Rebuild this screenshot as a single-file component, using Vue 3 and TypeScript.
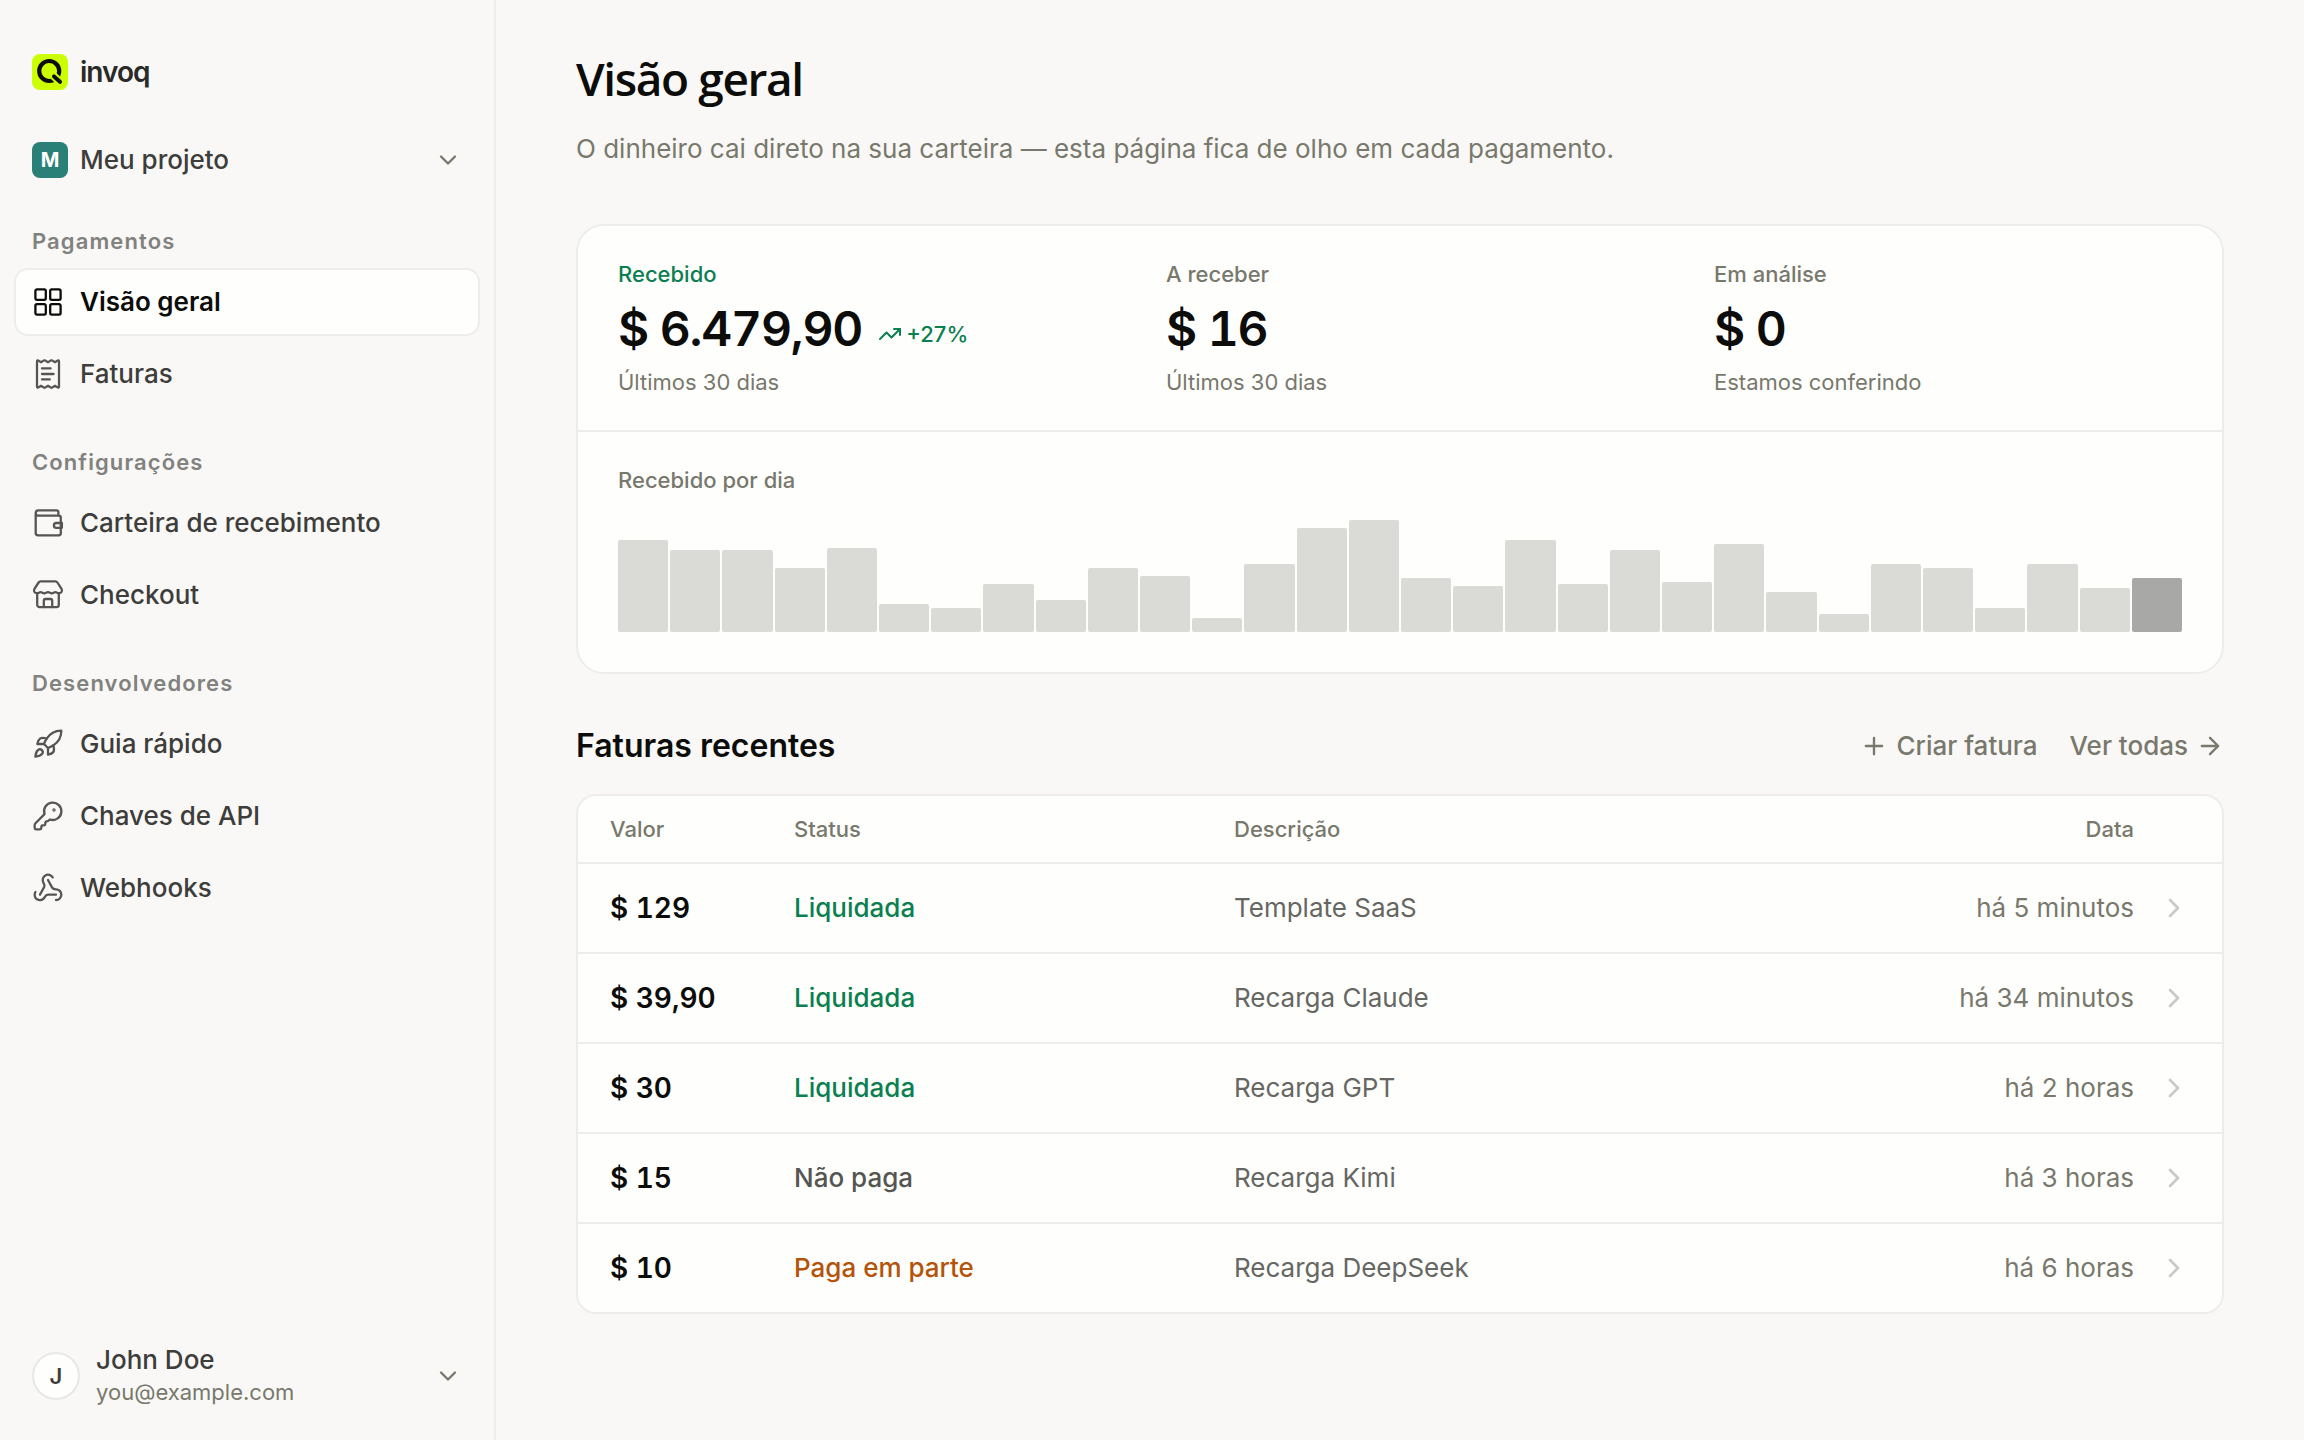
<script setup lang="ts">
interface Shape {
  d: string
  dot?: boolean
}
interface NavItem {
  label: string
  box: number
  shapes: Shape[]
  active?: boolean
}
interface NavGroup {
  title: string
  items: NavItem[]
}
interface Invoice {
  amount: string
  status: string
  tone: 'paid' | 'unpaid' | 'partial'
  description: string
  date: string
}

const groups: NavGroup[] = [
  {
    title: 'Pagamentos',
    items: [
      {
        label: 'Visão geral',
        box: 32,
        active: true,
        shapes: [
          { d: 'M5 3.4h7.2a1.6 1.6 0 0 1 1.6 1.6v7.2a1.6 1.6 0 0 1-1.6 1.6H5a1.6 1.6 0 0 1-1.6-1.6V5A1.6 1.6 0 0 1 5 3.4z' },
          { d: 'M19.8 3.4H27A1.6 1.6 0 0 1 28.6 5v7.2a1.6 1.6 0 0 1-1.6 1.6h-7.2a1.6 1.6 0 0 1-1.6-1.6V5a1.6 1.6 0 0 1 1.6-1.6z' },
          { d: 'M5 18.2h7.2a1.6 1.6 0 0 1 1.6 1.6V27a1.6 1.6 0 0 1-1.6 1.6H5A1.6 1.6 0 0 1 3.4 27v-7.2A1.6 1.6 0 0 1 5 18.2z' },
          { d: 'M19.8 18.2H27a1.6 1.6 0 0 1 1.6 1.6V27a1.6 1.6 0 0 1-1.6 1.6h-7.2a1.6 1.6 0 0 1-1.6-1.6v-7.2a1.6 1.6 0 0 1 1.6-1.6z' },
        ],
      },
      {
        label: 'Faturas',
        box: 32,
        shapes: [
          { d: 'M5 3.4C5 2.3 5.8 2.1 6.6 2.6L9 4.2l2.6-1.6q.9-.5 1.8 0L16 4.2l2.6-1.6q.9-.5 1.8 0L23 4.2l2.4-1.6C26.2 2.1 27 2.3 27 3.4v25.2c0 1.1-.8 1.3-1.6.8L23 27.8l-2.6 1.6q-.9.5-1.8 0L16 27.8l-2.6 1.6q-.9.5-1.8 0L9 27.8l-2.4 1.6C5.8 29.9 5 29.7 5 28.6z' },
          { d: 'M10 10.4h8.6M10 16h11.6M10 21.4h7.8' },
        ],
      },
    ],
  },
  {
    title: 'Configurações',
    items: [
      {
        label: 'Carteira de recebimento',
        box: 32,
        shapes: [
          { d: 'M3.7 6v20a2.3 2.3 0 0 0 2.3 2.3h20.8a2 2 0 0 0 2-2V10.8a2.1 2.1 0 0 0-2.1-2.1H6.4a2.7 2.7 0 0 1 0-5.4h18a2 2 0 0 1 2 2v3.4' },
          { d: 'M29.9 16h-5.6a2.4 2.4 0 0 0 0 4.8h5.6z' },
        ],
      },
      {
        label: 'Checkout',
        box: 32,
        shapes: [
          { d: 'M8.6 2.4h14.8a2.4 2.4 0 0 1 2 1.1l4 6.1c1.4 2.2.2 4.6-2.4 4.6-1.8 0-2-1-3.6-1s-2 1.2-3.6 1.2-2.2-1.2-3.8-1.2-2.2 1.2-3.8 1.2-2-1.2-3.6-1.2-1.8 1-3.6 1c-2.6 0-3.8-2.4-2.4-4.6l4-6.1a2.4 2.4 0 0 1 2-1.1z' },
          { d: 'M5.2 14.2v11.6A2.4 2.4 0 0 0 7.6 28.2h16.8a2.4 2.4 0 0 0 2.4-2.4V14.2' },
          { d: 'M11.8 28v-6.2a1.8 1.8 0 0 1 1.8-1.8h4.8a1.8 1.8 0 0 1 1.8 1.8V28' },
        ],
      },
    ],
  },
  {
    title: 'Desenvolvedores',
    items: [
      {
        label: 'Guia rápido',
        box: 24,
        shapes: [
          { d: 'M4.5 16.5c-1.5 1.26-2 5-2 5s3.74-.5 5-2c.71-.84.7-2.13-.09-2.91a2.18 2.18 0 0 0-2.91-.09z' },
          { d: 'm12 15-3-3a22 22 0 0 1 2-3.95A12.88 12.88 0 0 1 22 2c0 2.72-.78 7.5-6 11a22.35 22.35 0 0 1-4 2z' },
          { d: 'M9 12H4s.55-3.03 2-4c1.62-1.08 5 0 5 0' },
          { d: 'M12 15v5s3.03-.55 4-2c1.08-1.62 0-5 0-5' },
        ],
      },
      {
        label: 'Chaves de API',
        box: 24,
        shapes: [
          { d: 'M2.586 17.414A2 2 0 0 0 2 18.828V21a1 1 0 0 0 1 1h3a1 1 0 0 0 1-1v-1a1 1 0 0 1 1-1h1a1 1 0 0 0 1-1v-1a1 1 0 0 1 1-1h.172a2 2 0 0 0 1.414-.586l.814-.814a6.5 6.5 0 1 0-4-4z' },
          { d: 'M16.5 7.1a.4.4 0 1 1 0 .8.4.4 0 0 1 0-.8z', dot: true },
        ],
      },
      {
        label: 'Webhooks',
        box: 24,
        shapes: [
          { d: 'M18 16.98h-5.99c-1.1 0-1.95.94-2.48 1.9A4 4 0 0 1 2 17c.01-.7.2-1.4.57-2' },
          { d: 'm6 17 3.13-5.78c.53-.97.1-2.18-.5-3.1a4 4 0 1 1 6.89-4.06' },
          { d: 'm12 6 3.13 5.73C15.66 12.7 16.9 13 18 13a4 4 0 0 1 0 8' },
        ],
      },
    ],
  },
]

const stats = [
  { label: 'Recebido', value: '$ 6.479,90', note: 'Últimos 30 dias', trend: '+27%' },
  { label: 'A receber', value: '$ 16', note: 'Últimos 30 dias' },
  { label: 'Em análise', value: '$ 0', note: 'Estamos conferindo' },
]

const days: number[] = [
  92, 82, 82, 64, 84, 28, 24, 48, 32, 64, 56, 14, 68, 104, 112, 54, 46, 92, 48, 82, 50, 88, 40, 18,
  68, 64, 24, 68, 44, 54,
]
const peak = Math.max(...days)

const invoices: Invoice[] = [
  { amount: '$ 129', status: 'Liquidada', tone: 'paid', description: 'Template SaaS', date: 'há 5 minutos' },
  { amount: '$ 39,90', status: 'Liquidada', tone: 'paid', description: 'Recarga Claude', date: 'há 34 minutos' },
  { amount: '$ 30', status: 'Liquidada', tone: 'paid', description: 'Recarga GPT', date: 'há 2 horas' },
  { amount: '$ 15', status: 'Não paga', tone: 'unpaid', description: 'Recarga Kimi', date: 'há 3 horas' },
  { amount: '$ 10', status: 'Paga em parte', tone: 'partial', description: 'Recarga DeepSeek', date: 'há 6 horas' },
]
</script>

<template>
  <div class="app">
    <aside class="sidebar">
      <a class="brand" href="#">
        <svg class="logo" viewBox="0 0 36 36" aria-hidden="true">
          <rect width="36" height="36" rx="8" fill="#ccff00" />
          <circle cx="17.2" cy="17" r="10" fill="none" stroke="#0c0c0a" stroke-width="4.2" />
          <path d="M20 20.4 30 30" stroke="#ccff00" stroke-width="8" />
          <path d="M22 22.4l6 5.4" stroke="#0c0c0a" stroke-width="4" stroke-linecap="round" />
        </svg>
        <span class="brand-name">invoq</span>
      </a>

      <button class="project" type="button">
        <span class="project-badge">M</span>
        <span class="grow">Meu projeto</span>
        <svg class="icon-sm" viewBox="0 0 24 24" aria-hidden="true"><path d="m6 9 6 6 6-6" /></svg>
      </button>

      <nav class="nav">
        <section v-for="group in groups" :key="group.title" class="group">
          <h2 class="group-title">{{ group.title }}</h2>
          <a
            v-for="item in group.items"
            :key="item.label"
            class="item"
            :class="{ active: item.active }"
            href="#"
          >
            <svg
              class="item-icon"
              :viewBox="`0 0 ${item.box} ${item.box}`"
              :stroke-width="item.box / 14"
              aria-hidden="true"
            >
              <path
                v-for="shape in item.shapes"
                :key="shape.d"
                :d="shape.d"
                :class="{ dot: shape.dot }"
              />
            </svg>
            <span>{{ item.label }}</span>
          </a>
        </section>
      </nav>

      <button class="account" type="button">
        <span class="avatar">J</span>
        <span class="grow account-text">
          <span class="account-name">John Doe</span>
          <span class="account-mail">you@example.com</span>
        </span>
        <svg class="icon-sm" viewBox="0 0 24 24" aria-hidden="true"><path d="m6 9 6 6 6-6" /></svg>
      </button>
    </aside>

    <main class="main">
      <h1 class="title">Visão geral</h1>
      <p class="subtitle">
        O dinheiro cai direto na sua carteira — esta página fica de olho em cada pagamento.
      </p>

      <section class="card summary">
        <div class="stats">
          <div v-for="stat in stats" :key="stat.label" class="stat">
            <div class="stat-label" :class="{ green: stat.trend }">{{ stat.label }}</div>
            <div class="stat-row">
              <span class="stat-value">{{ stat.value }}</span>
              <span v-if="stat.trend" class="trend">
                <svg class="trend-icon" viewBox="0 0 24 24" aria-hidden="true">
                  <path d="M16 7h6v6" />
                  <path d="m22 7-8.5 8.5-5-5L2 17" />
                </svg>
                {{ stat.trend }}
              </span>
            </div>
            <div class="stat-note">{{ stat.note }}</div>
          </div>
        </div>
        <div class="chart">
          <div class="chart-title">Recebido por dia</div>
          <div class="bars">
            <div
              v-for="(day, index) in days"
              :key="index"
              class="bar"
              :style="{ height: `${(day / peak) * 100}%` }"
            ></div>
          </div>
        </div>
      </section>

      <div class="section-head">
        <h2 class="section-title">Faturas recentes</h2>
        <div class="actions">
          <button class="action" type="button">
            <svg class="icon-sm" viewBox="0 0 24 24" aria-hidden="true"><path d="M5 12h14M12 5v14" /></svg>
            Criar fatura
          </button>
          <a class="action" href="#">
            Ver todas
            <svg class="icon-sm" viewBox="0 0 24 24" aria-hidden="true">
              <path d="M5 12h14M12 5l7 7-7 7" />
            </svg>
          </a>
        </div>
      </div>

      <div class="card list">
        <table class="table">
          <thead>
            <tr>
              <th class="col-amount" scope="col">Valor</th>
              <th class="col-status" scope="col">Status</th>
              <th scope="col">Descrição</th>
              <th class="col-date" scope="col">Data</th>
              <th class="col-open"></th>
            </tr>
          </thead>
          <tbody>
            <tr v-for="invoice in invoices" :key="invoice.description">
              <td class="col-amount amount">{{ invoice.amount }}</td>
              <td class="status" :class="invoice.tone">{{ invoice.status }}</td>
              <td class="description">{{ invoice.description }}</td>
              <td class="col-date date">{{ invoice.date }}</td>
              <td class="col-open">
                <a class="open" href="#" :aria-label="`Abrir ${invoice.description}`">
                  <svg class="open-icon" viewBox="0 0 24 24" aria-hidden="true"><path d="m9 18 6-6-6-6" /></svg>
                </a>
              </td>
            </tr>
          </tbody>
        </table>
      </div>
    </main>
  </div>
</template>

<style>
body {
  margin: 0;
  background: #f9f8f6;
}
</style>

<style scoped>
.app {
  display: flex;
  min-height: 100vh;
  background: #f9f8f6;
  color: #0c0c0a;
  font-family: Inter, 'Liberation Sans', sans-serif;
  font-size: 26px;
  line-height: 32px;
}
h1,
h2,
p {
  margin: 0;
}
a {
  color: inherit;
  text-decoration: none;
}
button {
  padding: 0;
  border: 0;
  background: none;
  color: inherit;
  font: inherit;
  text-align: left;
  cursor: pointer;
}
svg {
  display: block;
  flex: none;
}
.grow {
  flex: 1;
}
.icon-sm,
.item-icon,
.trend-icon,
.open-icon {
  fill: none;
  stroke: currentColor;
  stroke-linecap: round;
  stroke-linejoin: round;
}
.icon-sm {
  width: 28px;
  height: 28px;
  stroke: #78786c;
  stroke-width: 2;
}

.sidebar {
  box-sizing: border-box;
  flex: none;
  display: flex;
  flex-direction: column;
  width: 496px;
  padding: 40px 16px 32px;
  border-right: 2px solid #eeedeb;
  color: #3d3d3b;
  font-weight: 500;
}
.brand,
.project,
.item,
.account {
  display: flex;
  align-items: center;
  height: 64px;
  padding: 0 16px;
}
.brand,
.project {
  gap: 12px;
}
.brand {
  margin-bottom: 24px;
}
.logo {
  width: 36px;
  height: 36px;
}
.brand-name {
  color: #2a2a28;
  font-size: 28px;
  font-weight: 600;
  letter-spacing: -1px;
}
.project-badge {
  display: grid;
  place-items: center;
  width: 36px;
  height: 36px;
  border-radius: 8px;
  background: #2a7f77;
  color: #fff;
  font-size: 20px;
  font-weight: 700;
}
.nav {
  display: flex;
  flex: 1;
  flex-direction: column;
  gap: 40px;
  padding-top: 33px;
}
.group {
  display: flex;
  flex-direction: column;
  gap: 8px;
}
.group-title {
  margin-bottom: 5px;
  padding: 0 16px;
  color: #81817e;
  font-size: 22px;
  font-weight: 600;
  letter-spacing: 0.05em;
}
.item {
  gap: 16px;
  border-radius: 12px;
}
.item-icon {
  width: 32px;
  height: 32px;
  color: #555552;
}
.item-icon .dot {
  fill: currentColor;
}
.item.active {
  background: #fefefc;
  box-shadow: 0 0 0 2px #eeedeb;
  color: #0c0c0a;
  font-weight: 600;
}
.item.active .item-icon {
  color: #0c0c0a;
}
.account {
  gap: 16px;
}
.avatar {
  box-sizing: border-box;
  display: grid;
  place-items: center;
  width: 48px;
  height: 48px;
  border: 2px solid #e9e8e6;
  border-radius: 50%;
  background: #fefefc;
  font-size: 22px;
  font-weight: 600;
}
.account-text {
  display: flex;
  flex-direction: column;
}
.account-mail {
  color: #78786c;
  font-size: 22px;
  font-weight: 400;
}

.main {
  flex: 1;
  min-width: 0;
  padding: 46px 80px;
}
.title {
  font-family: 'Open Sans', Inter, sans-serif;
  font-size: 46px;
  font-weight: 600;
  line-height: 64px;
  letter-spacing: -0.03em;
}
.subtitle {
  margin: 19px 0 55px;
  color: #78786c;
  line-height: 40px;
}
.card {
  border: 2px solid #eeedeb;
  background: #fefefc;
}
.summary {
  border-radius: 28px;
}
.stats {
  display: grid;
  grid-template-columns: repeat(3, 1fr);
  border-bottom: 2px solid #eeedeb;
}
.stat {
  padding: 32px 40px;
}
.stat-label,
.stat-note,
.chart-title {
  color: #78786c;
  font-size: 22px;
}
.stat-label,
.chart-title {
  font-weight: 500;
}
.stat-label.green {
  color: #0a7f50;
}
.stat-row {
  display: flex;
  align-items: center;
  gap: 16px;
  padding: 11px 0 9px;
}
.stat-value {
  font-size: 48px;
  font-weight: 600;
  font-variant-numeric: tabular-nums;
  line-height: 56px;
  letter-spacing: -0.025em;
}
.trend {
  display: flex;
  align-items: center;
  gap: 4px;
  padding-top: 10px;
  color: #0a7f50;
  font-size: 22px;
  font-weight: 500;
}
.trend-icon {
  width: 24px;
  height: 24px;
  stroke-width: 2;
}
.chart {
  padding: 32px 40px 40px;
}
.bars {
  display: flex;
  align-items: flex-end;
  gap: 2px;
  height: 112px;
  margin-top: 24px;
}
.bar {
  flex: 1;
  border-radius: 2px;
  background: #dadbd6;
}
.bar:last-child {
  background: #a8a8a6;
}

.section-head {
  display: flex;
  align-items: center;
  justify-content: space-between;
  margin: 52px 0 28px;
}
.section-title {
  font-size: 32px;
  font-weight: 600;
  line-height: 40px;
}
.actions {
  display: flex;
  gap: 32px;
}
.action {
  display: flex;
  align-items: center;
  gap: 8px;
  color: #78786c;
  font-weight: 500;
}

.list {
  overflow: hidden;
  border-radius: 20px;
}
.table {
  width: 100%;
  border-spacing: 0;
  table-layout: fixed;
}
th,
td {
  box-sizing: border-box;
  height: 90px;
  padding: 0;
  border-bottom: 2px solid #eeedeb;
  text-align: left;
}
th {
  height: 68px;
  color: #78786c;
  font-size: 22px;
  font-weight: 500;
}
tbody tr:last-child td {
  height: 88px;
  border-bottom: 0;
}
.col-amount {
  width: 216px;
  padding-left: 32px;
}
.col-status {
  width: 440px;
}
.col-date {
  width: 400px;
  text-align: right;
}
.col-open {
  width: 88px;
  padding-right: 32px;
}
.amount {
  font-size: 28px;
  font-weight: 600;
  font-variant-numeric: tabular-nums;
}
.status {
  font-weight: 500;
}
.paid {
  color: #0a7f50;
}
.unpaid {
  color: #555552;
}
.partial {
  color: #b45309;
}
.description {
  color: #666663;
}
.date {
  color: #78786c;
}
.open {
  display: flex;
  justify-content: flex-end;
  color: #c9c9c5;
}
.open-icon {
  width: 32px;
  height: 32px;
  stroke-width: 2;
}
</style>
